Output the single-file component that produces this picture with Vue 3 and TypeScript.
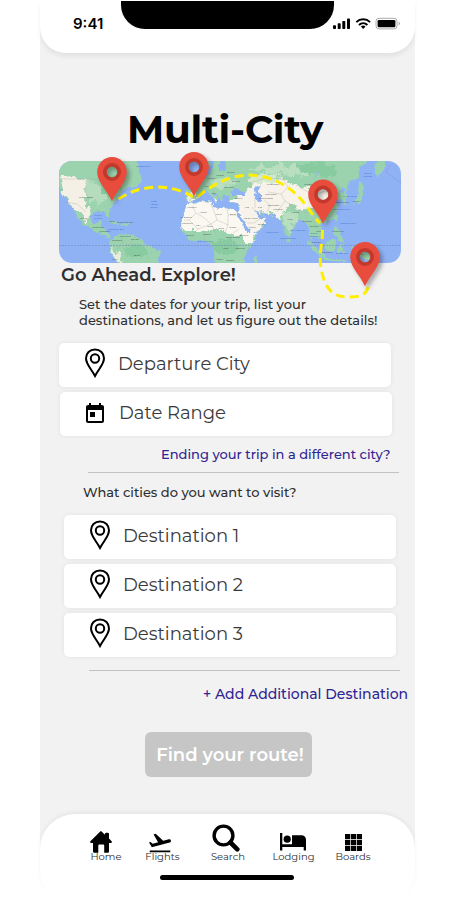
<script setup lang="ts">
import { ref } from 'vue'

interface Label { x: number; y: number; t: string }
interface Pin { x: number; y: number }

const destinations = ref<string[]>(['Destination 1', 'Destination 2', 'Destination 3'])

// Centres of the pin heads, in map coordinates
const pins: Pin[] = [
  { x: 53, y: 11 },
  { x: 135, y: 6 },
  { x: 264, y: 33.5 },
  { x: 306, y: 96 },
]

const seaLabels: Label[] = [
  { x: 84, y: 6, t: 'Labrador Sea' },
  { x: 95, y: 41, t: 'North' },
  { x: 95, y: 43.8, t: 'Atlantic' },
  { x: 95, y: 46.6, t: 'Ocean' },
  { x: 39, y: 55, t: 'Gulf of' },
  { x: 39, y: 57.8, t: 'Mexico' },
  { x: 57, y: 69, t: 'Caribbean Sea' },
  { x: 146, y: 81, t: 'Gulf of Guinea' },
  { x: 213, y: 72, t: 'Arabian Sea' },
  { x: 239, y: 70, t: 'Bay of Bengal' },
  { x: 229, y: 78, t: 'Laccadive Sea' },
  { x: 289, y: 63, t: 'Philippine Sea' },
  { x: 291, y: 36, t: 'Sea of Japan' },
  { x: 309, y: 13, t: 'Sea of' },
  { x: 309, y: 16, t: 'Okhotsk' },
  { x: 283, y: 49, t: 'East China Sea' },
  { x: 255, y: 73, t: 'Gulf of' },
  { x: 255, y: 76, t: 'Thailand' },
  { x: 283, y: 93, t: 'Banda Sea' },
]
const landLabels: Label[] = [
  { x: 27, y: 37, t: 'United States' },
  { x: 25, y: 58, t: 'Mexico' },
  { x: 39, y: 67, t: 'Guatemala' },
  { x: 46, y: 71, t: 'Nicaragua' },
  { x: 66, y: 62, t: 'Dominican Rep' },
  { x: 53, y: 61, t: 'Cuba' },
  { x: 66, y: 75.5, t: 'Venezuela' },
  { x: 58, y: 80, t: 'Colombia' },
  { x: 78, y: 95, t: 'Brazil' },
  { x: 76, y: 79, t: 'Guyana' },
  { x: 56, y: 99, t: 'Peru' },
  { x: 133, y: 47, t: 'Morocco' },
  { x: 144, y: 52, t: 'Algeria' },
  { x: 160, y: 54, t: 'Libya' },
  { x: 174, y: 54, t: 'Egypt' },
  { x: 128, y: 63, t: 'Mauritania' },
  { x: 139, y: 65, t: 'Mali' },
  { x: 151, y: 65.5, t: 'Niger' },
  { x: 162, y: 68, t: 'Chad' },
  { x: 174, y: 67, t: 'Sudan' },
  { x: 127, y: 57, t: 'W. Sahara' },
  { x: 131, y: 75, t: 'Guinea' },
  { x: 148, y: 74, t: 'Nigeria' },
  { x: 185, y: 75, t: 'Ethiopia' },
  { x: 174, y: 77, t: 'South Sudan' },
  { x: 167, y: 88, t: 'DRC' },
  { x: 181, y: 88, t: 'Tanzania' },
  { x: 160, y: 99, t: 'Angola' },
  { x: 171, y: 100, t: 'Zambia' },
  { x: 192, y: 58, t: 'Saudi Arabia' },
  { x: 193, y: 67, t: 'Yemen' },
  { x: 202, y: 64, t: 'Oman' },
  { x: 188, y: 47, t: 'Iraq' },
  { x: 201, y: 47, t: 'Iran' },
  { x: 180, y: 38, t: 'Türkiye' },
  { x: 177, y: 21, t: 'Ukraine' },
  { x: 172, y: 12, t: 'Belarus' },
  { x: 161, y: 15, t: 'Poland' },
  { x: 153, y: 18, t: 'Germany' },
  { x: 149, y: 26, t: 'France' },
  { x: 134, y: 36, t: 'Spain' },
  { x: 155, y: 33, t: 'Italy' },
  { x: 170, y: 27, t: 'Romania' },
  { x: 214, y: 24, t: 'Kazakhstan' },
  { x: 212, y: 34, t: 'Uzbekistan' },
  { x: 207, y: 38, t: 'Turkmenistan' },
  { x: 214, y: 45, t: 'Afghanistan' },
  { x: 219, y: 49, t: 'Pakistan' },
  { x: 231, y: 59, t: 'India' },
  { x: 237, y: 52, t: 'Nepal' },
  { x: 255, y: 43, t: 'China' },
  { x: 250, y: 24, t: 'Mongolia' },
  { x: 248, y: 61, t: 'Myanmar' },
  { x: 255, y: 66, t: 'Thailand' },
  { x: 261, y: 71, t: 'Vietnam' },
  { x: 283, y: 42, t: 'South Korea' },
  { x: 297, y: 41, t: 'Japan' },
  { x: 279, y: 71, t: 'Philippines' },
  { x: 257, y: 82, t: 'Malaysia' },
  { x: 268, y: 92, t: 'Indonesia' },
  { x: 301, y: 94, t: 'Papua' },
]
</script>

<template>
  <div class="phone">
    <header class="status">
      <span class="clock">9:41</span>
      <span class="notch"></span>
      <svg class="signals" viewBox="0 0 70 14" aria-hidden="true">
        <rect x="1" y="8.3" width="3" height="3.7" rx=".8" />
        <rect x="5.7" y="6.3" width="3" height="5.7" rx=".8" />
        <rect x="10.3" y="4" width="3" height="8" rx=".8" />
        <rect x="15" y="1.5" width="3" height="10.5" rx=".8" />
        <g class="arc">
          <path d="M24.3 5.1a10 10 0 0 1 13.8 0" />
          <path d="M27 8a6.2 6.2 0 0 1 8.4 0" />
        </g>
        <path d="M28.9 9.6a3.4 3.4 0 0 1 4.6 0l-2.3 2.5z" />
        <rect class="cell" x="44" y="1.3" width="21" height="10.6" rx="3" />
        <rect x="45.6" y="2.9" width="17.8" height="7.4" rx="1.4" />
        <path class="nub" d="M66.6 4.8v3.6c.9-.3 1.4-1 1.4-1.8s-.5-1.5-1.4-1.8z" />
      </svg>
    </header>

    <main class="content">
      <h1>Multi-City</h1>

      <div class="map-wrap">
        <svg class="map" viewBox="0 0 342 102" preserveAspectRatio="none" aria-hidden="true">
          <defs>
            <filter id="coast" x="-5%" y="-5%" width="110%" height="110%" color-interpolation-filters="sRGB">
              <feTurbulence type="fractalNoise" baseFrequency=".22" numOctaves="3" seed="4" />
              <feDisplacementMap in="SourceGraphic" scale="5" xChannelSelector="R" yChannelSelector="G" />
            </filter>
            <filter id="soft" x="-20%" y="-20%" width="140%" height="140%" color-interpolation-filters="sRGB">
              <feTurbulence type="fractalNoise" baseFrequency=".12" numOctaves="3" seed="9" />
              <feDisplacementMap in="SourceGraphic" scale="12" xChannelSelector="R" yChannelSelector="G" />
              <feGaussianBlur stdDeviation=".7" />
            </filter>
            <clipPath id="land">
              <path d="M-5-5H76L80 8 83 20 76 26 68 27 61 32 57 40 53 45 50 50 50 57 47 56 46 51 40 50 33 52 31 57 34 63 38 62 42 59 43 65 48 70 52 78 49 77 42 73 33 68 24 64 18 55 12 44 8 40 4 33-5 20Z" />
              <path d="M51 81 60 72 70 74 79 75 85 82 94 86 102 91 100 98 96 106H62L56 98 51 90Z" />
              <path d="M127 45 134 42 145 40 153 41 154 46 161 48 170 47 177 50 182 62 188 72 198 72 195 81 187 91 185 106H158L155 96 155 87 150 82 142 79 134 81 128 76 123 69 122 62Z" />
              <path d="M128 29 138 29 136 22 145 17 151 13 154 4 160-5H300L310-2 301 7 300 17 290 20 288 32 288 42 284 44 283 38 277 39 280 46 276 57 266 62 260 63 264 71 260 78 254 73 252 81 250 67 246 60 241 58 234 67 231 77 226 72 223 60 217 55 206 52 200 50 207 57 204 66 192 73 186 62 179 52 180 43 172 42 169 35 164 33 163 40 158 33 152 29 159 37 157 41 149 31 144 31 138 39 131 41 127 38Z" />
              <path d="M136 9 142 15 143 20 135 21ZM128 14 133 13 133 19 127 20ZM141-5 146-5 151 3 147 12 142 8Z" />
              <path d="M320-5H327L325 9 318 17 315 11Z M300 19 305 26 303 34 303 40 292 44 299 37Z M276 54l3 0-1 6-3-1Z M275 65l4 2 5 13-4 0-5-9Z M247 78 260 89 266 96 262 96 252 87Z M266 82 277 78 276 90 268 91Z M263 96 286 99 286 101 264 99Z M280 84l6-2-3 4 4 7-5-3-3 4Z M292 86 304 89 317 98 306 98 294 92Z M288 103 299 100 310 106H288Z" />
              <path d="M48 60 57 61 62 64 55 63ZM63 62l7 1-3 2-5-1ZM228 77l3 3-2 3-2-3ZM195 98l4-5-1 12-4 0Z" />
            </clipPath>
          </defs>
          <rect width="342" height="102" fill="#8fb2f5" />
          <g filter="url(#coast)">
            <g clip-path="url(#land)">
              <rect x="-6" y="-6" width="354" height="114" fill="#9bd3ae" />
              <g filter="url(#soft)">
                <path fill="#f4f0e6" d="M3 16 18 15 28 21 27 39 33 51 29 62 17 50 9 38 2 31Z" />
                <path fill="#b5dcbd" d="M27 20 40 24 47 36 40 46 30 38Z" />
                <path fill="#fbf8f1" d="M120 38H182L190 64 200 70 191 84 182 75 170 72 155 69 139 69 120 69Z" />
                <path fill="#f7f3ea" d="M178 32 189 30 195 20 225 17 238 26 258 28 276 24 275 34 263 44 242 48 228 44 222 56 213 55 203 48 208 65 193 73 180 52Z" />
                <path fill="#d3e8cd" d="M188 18 206 13 224 16 214 22 196 22Z" />
                <path fill="#b9dfc0" d="M224 52 234 50 240 54 232 68 228 70ZM183 8 230 4 260 12 230 14ZM150 20 170 16 180 22 160 28Z" />
                <path fill="#e7eedc" d="M127 31 139 32 134 38 128 37ZM51 84 56 89 64 102 58 104Z" />
                <path fill="#88cba1" d="M234 6 260 0 280 10 270 18 250 12ZM62 86 82 84 92 92 70 98ZM152 80 176 80 176 92 158 92ZM40 24 58 12 60 26 46 38Z" />
              </g>
            </g>
            <path fill="#8fb2f5" d="M171 31 177 27 181 30 187 31 184 35 173 35ZM195 27 201 25 199 31 203 34 203 41 199 41 196 35ZM178 51 181 53 192 70 190 72 185 66ZM196 49 200 52 206 56 202 58 198 54ZM163-2 167-2 166 9 161 9 159 5ZM46 17 51 19 52 23 55 26 51 25ZM40-4 55-4 53 4 45 2ZM283 27 287 28 284 32 280 31ZM256 15 260 10 258 14 254 18Z" />
          </g>
          <g class="borders">
            <path d="M133 45 137 52 130 59 125 59M137 52 144 56 152 63 158 59 155 50 152 43M130 59 139 68 152 63M158 59 169 64 169 54 168 47M169 54H183M169 64 166 72M152 63 157 72M180 68 174 72M139 68 134 74M145 69V79M62 74 64 82 58 88M76 76 72 83 66 84M202 57 195 62 188 62M193 46 200 54M196 36 196 47M205 39 211 44 208 51M222 33 226 40 218 51M226 40 238 48 249 52M190 22 207 17 224 18 229 26 222 33 209 31M242 27 254 34 270 29M0 18H36L46 24M6 41 18 43 27 51M253 57 258 68" />
          </g>
          <path class="equator" d="M0 84.5H342" />
          <path class="dateline" d="M342 22 327 11 331 4" />
          <g class="sea"><text v-for="(l, i) in seaLabels" :key="i" :x="l.x" :y="l.y">{{ l.t }}</text></g>
          <g class="names"><text v-for="(l, i) in landLabels" :key="i" :x="l.x" :y="l.y">{{ l.t }}</text></g>
        </svg>

        <svg class="route" viewBox="0 0 342 140" aria-hidden="true">
          <path d="M59.5 38C83 22.500 112 22.500 134 36" />
          <path d="M139 35.500C161 17 188 7 217 20C243 31 251 53 261 62" />
          <path d="M263.500 69C264 80 259 95 262.500 110C267 130 275 136 289 136C304 136 307 133 309.500 125" />
          <g class="pins">
            <g v-for="(p, i) in pins" :key="i" :transform="`translate(${p.x} ${p.y})`">
              <path class="pin" fill-rule="evenodd" d="M0-15C8.300-15 14.800-8.300 14.800 0C14.800 10 5 18 0 29.300C-5 18-14.800 10-14.800 0C-14.800-8.300-8.300-15 0-15ZM0-5.500A5.500 5.500 0 1 0 0 5.500A5.500 5.500 0 1 0 0-5.500Z" />
              <circle class="ring" r="7.200" />
            </g>
          </g>
        </svg>
      </div>

      <h2>Go Ahead. Explore!</h2>
      <p class="intro">Set the dates for your trip, list your<br />destinations, and let us figure out the details!</p>

      <section class="fields">
        <div class="field">
          <svg class="marker" viewBox="0 0 22 30" aria-hidden="true">
            <path d="M11 1.500C5.700 1.500 2 5.300 2 10.300C2 16.500 7.300 20.800 11 28C14.700 20.800 20 16.500 20 10.300C20 5.300 16.300 1.500 11 1.500Z" />
            <circle cx="11" cy="10.500" r="4.200" />
          </svg>
          <span>Departure City</span>
        </div>
        <div class="field date">
          <svg class="calendar" viewBox="0 0 24 24" aria-hidden="true">
            <path d="M19 3h-1V1h-2v2H8V1H6v2H5c-1.110 0-1.990.9-1.990 2L3 19c0 1.100.890 2 2 2h14c1.100 0 2-.9 2-2V5c0-1.100-.9-2-2-2zm0 16H5V8h14v11zM7 10h5v5H7z" />
          </svg>
          <span>Date Range</span>
        </div>
      </section>

      <a class="link ending">Ending your trip in a different city?</a>
      <hr />
      <p class="question">What cities do you want to visit?</p>

      <section class="fields stops">
        <div v-for="d in destinations" :key="d" class="field">
          <svg class="marker" viewBox="0 0 22 30" aria-hidden="true">
            <path d="M11 1.500C5.700 1.500 2 5.300 2 10.300C2 16.500 7.300 20.800 11 28C14.700 20.800 20 16.500 20 10.300C20 5.300 16.300 1.500 11 1.500Z" />
            <circle cx="11" cy="10.500" r="4.200" />
          </svg>
          <span>{{ d }}</span>
        </div>
      </section>

      <hr class="second" />
      <a class="link add">+ Add Additional Destination</a>
      <button class="cta" type="button">Find your route!</button>
    </main>

    <nav class="tabs">
      <div class="tab home">
        <svg width="22" height="22" viewBox="0 0 22 22"><path d="M11 0 15 3.700V2.500C15 1.500 19 1.500 19 2.500V7.500L21.600 10.300C22.200 11 21.800 12 21 12H19V20.500Q19 21.700 17.800 21.700H14.200V14.500Q14.200 13.500 13.200 13.500H9.300Q8.300 13.500 8.300 14.500V21.700H4.200Q3 21.700 3 20.500V12H1C.200 12-.2 11 .4 10.300L10 .7Q10.500.1 11 0Z" /></svg>
        <span>Home</span>
      </div>
      <div class="tab flights">
        <svg width="26" height="26" viewBox="0 0 24 24"><path d="M2.500 19h19v1.600h-19zm19.570-9.360c-.21-.8-1.040-1.280-1.840-1.060L14.920 10l-6.900-6.430-1.930.51 4.140 7.170-4.970 1.330-1.970-1.540-1.450.39 1.820 3.160.77 1.330 1.600-.43 5.310-1.420 4.350-1.160L21 11.490c.81-.23 1.280-1.050 1.070-1.850z" /></svg>
        <span>Flights</span>
      </div>
      <div class="tab search">
        <svg width="28" height="28" viewBox="0 0 28 28"><circle cx="11.500" cy="11.500" r="9.400" /><path d="M18.500 18.500 25.300 25.300" /></svg>
        <span>Search</span>
      </div>
      <div class="tab lodging">
        <svg width="26" height="18" viewBox="0 0 26 18"><path d="M0 0H2.300V11.300H12V2.300H21.500C24 2.300 26 4 26 6.800V17.500H23.700V14H2.300V17.500H0Z" /><circle cx="7.200" cy="6.200" r="3.600" /></svg>
        <span>Lodging</span>
      </div>
      <div class="tab boards">
        <svg width="17" height="17" viewBox="0 0 17 17"><path d="M0 0h5.200v5.200H0zM5.900 0h5.200v5.200H5.900zM11.800 0H17v5.200h-5.200zM0 5.900h5.200v5.200H0zM5.900 5.900h5.200v5.200H5.900zM11.800 5.900H17v5.200h-5.200zM0 11.800h5.200V17H0zM5.900 11.800h5.200V17H5.900zM11.800 11.800H17V17h-5.200z" /></svg>
        <span>Boards</span>
      </div>
      <span class="indicator"></span>
    </nav>
  </div>
</template>

<style>
body { background: #fff; }
</style>

<style scoped>
.phone {
  width: 375px;
  height: 915px;
  margin-left: 40px;
  display: flex;
  flex-direction: column;
  background: linear-gradient(#f2f2f2 860px, #fff 860px);
  font-family: Montserrat, Inter, sans-serif;
  font-variant-ligatures: none;
  color: #2f2f2f;
}
h1, h2, p { margin: 0; }

.status {
  height: 53px;
  flex: none;
  display: flex;
  background: #fff;
  border-radius: 0 0 26px 26px;
  box-shadow: 0 4px 4px rgba(0, 0, 0, .06);
}
.clock {
  width: 48px;
  padding: 15px 0 0 33px;
  font: 600 15px/18px Inter, sans-serif;
  color: #000;
}
.notch {
  width: 213px;
  height: 28px;
  margin-top: 1px;
  background: #000;
  border-radius: 0 0 24px 24px;
}
.signals {
  width: 70px;
  height: 14px;
  margin: 17px 0 0 -2px;
}
.arc { fill: none; stroke: #000; stroke-width: 2; }
.cell { fill: none; stroke: #aaa; stroke-width: 1; }
.nub { fill: #aaa; }

.content {
  height: 761px;
  display: flex;
  flex-direction: column;
}
h1 {
  margin-top: 52px;
  padding-right: 5px;
  text-align: center;
  font-size: 39px;
  line-height: 48px;
  font-weight: 700;
  letter-spacing: -.3px;
  color: #000;
}
.map-wrap {
  position: relative;
  width: 342px;
  height: 102px;
  margin: 8px 0 0 19px;
}
.map {
  display: block;
  width: 342px;
  height: 102px;
  border-radius: 13px;
}
.map text {
  font-family: "Liberation Sans", sans-serif;
  font-size: 2.4px;
  text-anchor: middle;
}
.sea { fill: #3567c8; opacity: .85; }
.names { fill: #333; opacity: .75; }
.borders { fill: none; stroke: #a7a7a3; stroke-width: .35; }
.equator { fill: none; stroke: #7286b8; stroke-width: .6; stroke-dasharray: 2 1; }
.dateline { fill: none; stroke: #9585c8; stroke-width: .6; stroke-dasharray: 2 1; }
.route {
  position: absolute;
  left: 0;
  top: 0;
  width: 342px;
  height: 140px;
  overflow: visible;
  fill: none;
}
.route > path { stroke: #ffee00; stroke-width: 3; stroke-dasharray: 9 5; }
.pin { fill: #e74c3c; }
.ring { stroke: #c0392b; stroke-width: 3.6; }
.pins { filter: drop-shadow(3px 3px 2px rgba(0, 0, 0, .3)); }

h2 {
  margin: 1px 0 0 21px;
  font-size: 18px;
  line-height: 22px;
  font-weight: 600;
}
.intro {
  margin: 10px 0 0 39px;
  font-size: 13px;
  line-height: 16px;
  font-weight: 500;
  letter-spacing: .02px;
  white-space: nowrap;
}
.fields {
  display: flex;
  flex-direction: column;
  gap: 5px;
  margin: 14.5px 0 0 19px;
}
.field {
  width: 332px;
  height: 44px;
  display: flex;
  align-items: center;
  box-sizing: border-box;
  padding-left: 25px;
  background: #fff;
  border-radius: 5px;
  box-shadow: 0 0 5px rgba(0, 0, 0, .07);
  font-size: 18px;
  line-height: 22px;
  font-weight: 400;
  color: #3a3a3a;
}
.field span { margin: -1px 0 0 12px; }
.marker {
  width: 22px;
  height: 30px;
  margin-top: -3px;
  fill: none;
  stroke: #000;
  stroke-width: 2;
}
.date { margin-left: 1px; padding-left: 23px; }
.calendar { width: 24px; height: 24px; }
.link {
  font-weight: 500;
  color: #2f2491;
  white-space: nowrap;
}
.ending {
  margin: 10.5px 0 0 121px;
  font-size: 13px;
  line-height: 16px;
}
hr {
  width: 311px;
  height: 1px;
  flex: none;
  margin: 10px 0 0 48px;
  border: 0;
  background: #c2c2c2;
}
.question {
  margin: 11px 0 0 43px;
  font-size: 13px;
  line-height: 16px;
  font-weight: 500;
}
.stops { margin: 14.5px 0 0 24px; }
.second { margin: 13.5px 0 0 49px; }
.add {
  margin: 14px 0 0 163px;
  font-size: 14px;
  line-height: 18px;
}
.cta {
  width: 167px;
  height: 45px;
  flex: none;
  margin: 29px 0 0 105px;
  padding: 0 0 0 3px;
  border: 0;
  border-radius: 6px;
  background: #c6c6c6;
  color: #fff;
  font: 600 18px/22px Montserrat, Inter, sans-serif;
  white-space: nowrap;
}

.tabs {
  height: 92px;
  flex: none;
  display: grid;
  grid-template-columns: 56px 57px 74px 57px 62px;
  grid-template-rows: 49px 1fr;
  box-sizing: border-box;
  padding-left: 38px;
  background: #fff;
  border-radius: 35px;
  box-shadow: 0 -2px 4px rgba(0, 0, 0, .05);
}
.tab {
  display: flex;
  flex-direction: column;
  align-items: center;
  justify-content: flex-end;
  font-size: 10px;
  line-height: 13px;
}
.tab svg { display: block; fill: #000; }
.home svg { margin: 0 10px -3px 0; }
.flights svg { margin: 0 5px -6px 0; }
.search svg { margin: 0 4px -2px 0; }
.search circle { fill: none; stroke: #000; stroke-width: 3.4; }
.search path { stroke: #000; stroke-width: 4.6; stroke-linecap: round; }
.lodging svg { margin: 0 1px -1px 0; }
.boards svg { margin: 0 0 -1px 1px; }
.indicator {
  grid-column: 1 / -1;
  width: 134px;
  height: 5px;
  margin: 12px 0 0 82px;
  border-radius: 3px;
  background: #000;
}
</style>
